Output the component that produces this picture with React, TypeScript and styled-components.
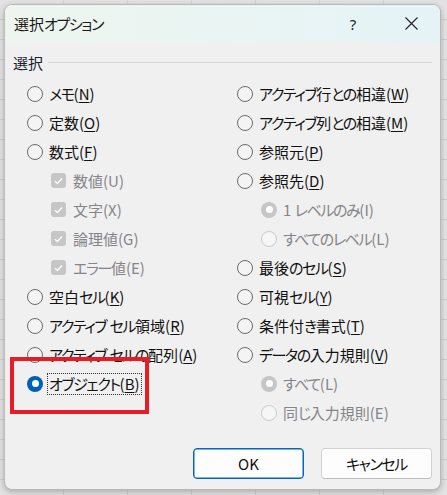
import React from "react";
import styled, { createGlobalStyle } from "styled-components";

const GlobalStyle = createGlobalStyle`
  html, body {
    margin: 0;
    padding: 0;
  }
  body {
    width: 447px;
    height: 495px;
    overflow: hidden;
    background-color: #e3e3e3;
    background-image:
      repeating-linear-gradient(to bottom, transparent 0, transparent 19px, #cfcfcf 19px, #cfcfcf 20px),
      repeating-linear-gradient(to right, transparent 0, transparent 63px, #d3d3d3 63px, #d3d3d3 64px);
    font-family: "Noto Sans CJK JP", "Noto Sans", sans-serif;
    font-feature-settings: "palt";
  }
`;

const Page = styled.div`
  padding: 4px 6px 5px 4px;
`;

const Dialog = styled.div`
  position: relative;
  width: 437px;
  height: 486px;
  box-sizing: border-box;
  border: 1px solid #b9b9b9;
  border-radius: 8px;
  background: #f0f0f0;
  overflow: hidden;
  display: flex;
  flex-direction: column;
  box-shadow: 0 2px 6px rgba(0, 0, 0, 0.25);
`;

const TitleBar = styled.div`
  height: 37px;
  flex: none;
  display: flex;
  align-items: center;
  padding-left: 9px;
  background: linear-gradient(to right, #eef5ee 0%, #e9f4f3 55%, #e5f3f7 100%);
  color: #1b1b1b;
  font-size: 15px;
`;

const Title = styled.span`
  flex: 1;
`;

const TitleButton = styled.span`
  width: 58px;
  height: 37px;
  display: flex;
  align-items: center;
  justify-content: center;
  font-size: 15px;
  color: #222;
  font-family: "Noto Sans", sans-serif;
`;

const Body = styled.div`
  flex: 1;
  padding: 9px 8px 0 8px;
`;

const GroupHeader = styled.div`
  height: 22px;
  display: flex;
  align-items: center;
  gap: 5px;
  font-size: 15px;
  color: #1a2030;
`;

const GroupRule = styled.div`
  flex: 1;
  height: 1px;
  background: #d6d6d6;
`;

const Columns = styled.div`
  margin-top: 6px;
  padding-left: 14px;
  display: grid;
  grid-template-columns: 210px 1fr;
`;

const Column = styled.div`
  display: grid;
  grid-auto-rows: 29px;
`;

const Row = styled.div<{ $indent?: boolean; $disabled?: boolean }>`
  display: flex;
  align-items: center;
  padding-left: ${(p) => (p.$indent ? "24px" : "0")};
  font-size: 15px;
  color: ${(p) => (p.$disabled ? "#858589" : "#111")};
  white-space: nowrap;
`;

const RadioMark = styled.span<{ $checked?: boolean; $disabled?: boolean }>`
  width: 16px;
  height: 16px;
  box-sizing: border-box;
  border-radius: 50%;
  flex: none;
  margin-right: 5px;
  display: flex;
  align-items: center;
  justify-content: center;
  border: ${(p) =>
    p.$checked ? "none" : p.$disabled ? "1px solid #cbcbcb" : "1px solid #6a6a6a"};
  background: ${(p) =>
    p.$checked ? (p.$disabled ? "#c6c6c6" : "#005fb8") : p.$disabled ? "#f6f6f6" : "#f4f4f4"};

  &::after {
    content: "";
    display: ${(p) => (p.$checked ? "block" : "none")};
    width: 7px;
    height: 7px;
    border-radius: 50%;
    background: #fff;
  }
`;

const CheckMark = styled.span`
  width: 15px;
  height: 15px;
  border-radius: 3px;
  background: #c6c6c6;
  flex: none;
  margin: 0 6px 0 24px;
  display: flex;
  align-items: center;
  justify-content: center;
`;

const Label = styled.span<{ $focus?: boolean }>`
  padding: 0 1px;
  line-height: 20px;
  outline: ${(p) => (p.$focus ? "1px dotted #333" : "none")};

  u {
    text-underline-offset: 2px;
  }
`;

// kana runs are set tighter, like the proportional kana of a Windows UI font
const Kana = styled.span`
  letter-spacing: -1.4px;
`;

const Footer = styled.div`
  flex: none;
  display: flex;
  justify-content: flex-end;
  gap: 17px;
  padding: 0 8px 10px 0;
`;

const Button = styled.button<{ $primary?: boolean }>`
  width: 111px;
  height: 31px;
  box-sizing: border-box;
  border-radius: 4px;
  background: #fdfdfd;
  border: 1px solid ${(p) => (p.$primary ? "#0067c0" : "#d2d2d2")};
  border-bottom-color: ${(p) => (p.$primary ? "#0067c0" : "#bdbdbd")};
  box-shadow: ${(p) => (p.$primary ? "inset 0 0 0 0.5px #0067c0" : "none")};
  font-family: "Noto Sans CJK JP", "Noto Sans", sans-serif;
  font-feature-settings: "palt";
  font-size: 15px;
  color: #111;
  padding: 0;
`;

const Highlight = styled.div`
  position: absolute;
  left: 5px;
  top: 352px;
  width: 139px;
  height: 57px;
  box-sizing: border-box;
  border: 4px solid #e81c25;
`;

type Item = {
  kind: "radio" | "check";
  text: string;
  key?: string;
  checked?: boolean;
  disabled?: boolean;
  indent?: boolean;
  focus?: boolean;
};

const left: Item[] = [
  { kind: "radio", text: "メモ", key: "N" },
  { kind: "radio", text: "定数", key: "O" },
  { kind: "radio", text: "数式", key: "F" },
  { kind: "check", text: "数値(U)", disabled: true },
  { kind: "check", text: "文字(X)", disabled: true },
  { kind: "check", text: "論理値(G)", disabled: true },
  { kind: "check", text: "エラー値(E)", disabled: true },
  { kind: "radio", text: "空白セル", key: "K" },
  { kind: "radio", text: "アクティブ セル領域", key: "R" },
  { kind: "radio", text: "アクティブ セルの配列", key: "A" },
  { kind: "radio", text: "オブジェクト", key: "B", checked: true, focus: true },
];

const right: Item[] = [
  { kind: "radio", text: "アクティブ行との相違", key: "W" },
  { kind: "radio", text: "アクティブ列との相違", key: "M" },
  { kind: "radio", text: "参照元", key: "P" },
  { kind: "radio", text: "参照先", key: "D" },
  { kind: "radio", text: "1 レベルのみ(I)", indent: true, disabled: true, checked: true },
  { kind: "radio", text: "すべてのレベル(L)", indent: true, disabled: true },
  { kind: "radio", text: "最後のセル", key: "S" },
  { kind: "radio", text: "可視セル", key: "Y" },
  { kind: "radio", text: "条件付き書式", key: "T" },
  { kind: "radio", text: "データの入力規則", key: "V" },
  { kind: "radio", text: "すべて(L)", indent: true, disabled: true, checked: true },
  { kind: "radio", text: "同じ入力規則(E)", indent: true, disabled: true },
];

const JpText: React.FC<{ text: string }> = ({ text }) => (
  <>
    {text.split(/([\u3040-\u30ff]+)/).map((part, i) =>
      /^[\u3040-\u30ff]+$/.test(part) ? <Kana key={i}>{part}</Kana> : part
    )}
  </>
);

const Tick = () => (
  <svg width="9" height="8" viewBox="0 0 9 8">
    <path d="M1 4.2 L3.4 6.5 L8 1.5" fill="none" stroke="#fff" strokeWidth="1.3" />
  </svg>
);

const Close = () => (
  <svg width="13" height="13" viewBox="0 0 13 13">
    <path d="M0.5 0.5 L12.5 12.5 M12.5 0.5 L0.5 12.5" stroke="#222" strokeWidth="1.1" />
  </svg>
);

const Option: React.FC<{ item: Item }> = ({ item }) => (
  <Row $indent={item.indent} $disabled={item.disabled}>
    {item.kind === "radio" ? (
      <RadioMark $checked={item.checked} $disabled={item.disabled} />
    ) : (
      <CheckMark>
        <Tick />
      </CheckMark>
    )}
    <Label $focus={item.focus}>
      <JpText text={item.text} />
      {item.key && (
        <>
          (<u>{item.key}</u>)
        </>
      )}
    </Label>
  </Row>
);

export default function App() {
  return (
    <>
      <GlobalStyle />
      <Page>
        <Dialog>
          <TitleBar>
            <Title>
              <JpText text="選択オプション" />
            </Title>
            <TitleButton>?</TitleButton>
            <TitleButton>
              <Close />
            </TitleButton>
          </TitleBar>
          <Body>
            <GroupHeader>
              選択
              <GroupRule />
            </GroupHeader>
            <Columns>
              <Column>
                {left.map((it, i) => (
                  <Option key={i} item={it} />
                ))}
              </Column>
              <Column>
                {right.map((it, i) => (
                  <Option key={i} item={it} />
                ))}
              </Column>
            </Columns>
          </Body>
          <Footer>
            <Button $primary>OK</Button>
            <Button>
              <JpText text="キャンセル" />
            </Button>
          </Footer>
          <Highlight />
        </Dialog>
      </Page>
    </>
  );
}
